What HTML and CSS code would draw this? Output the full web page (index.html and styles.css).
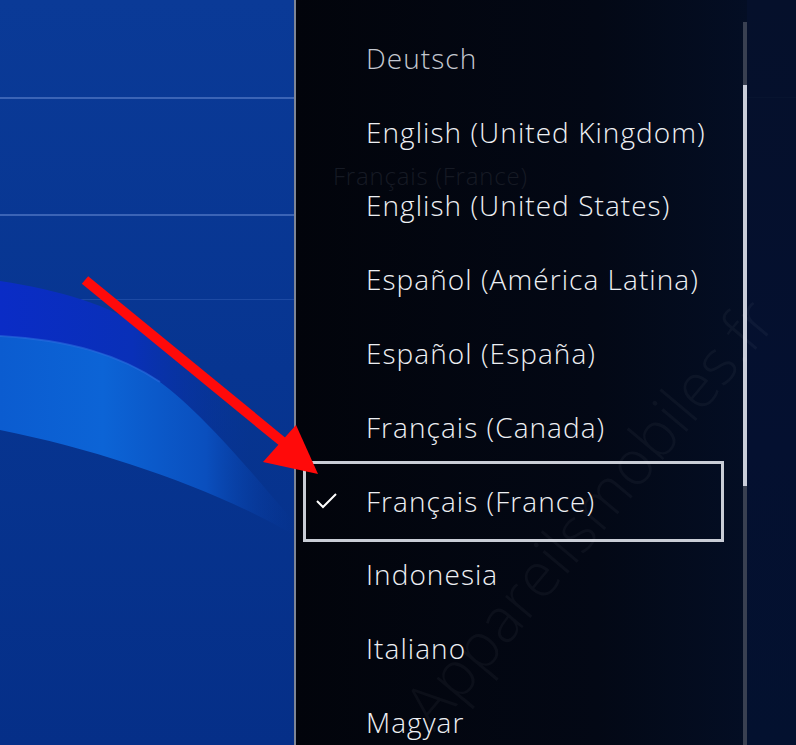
FILE: index.html
```html
<!DOCTYPE html>
<html lang="fr">
<head>
    <meta charset="UTF-8">
    <meta name="viewport" content="width=device-width, initial-scale=1.0">
    <title>Langue</title>
    <link rel="stylesheet" href="styles.css">
</head>
<body>
    <div class="screen">
        <div class="home">
            <div class="rule rule-1"></div>
            <div class="rule rule-2"></div>
            <div class="rule rule-3"></div>
            <svg class="waves" width="294" height="745" viewBox="0 0 294 745">
                <defs>
                    <linearGradient id="deep" x1="0" y1="0" x2="1" y2="0">
                        <stop offset="0" stop-color="#0a2cc6"/>
                        <stop offset="0.45" stop-color="#0930b8"/>
                        <stop offset="0.85" stop-color="#07349a" stop-opacity="0"/>
                    </linearGradient>
                    <linearGradient id="light" x1="0" y1="0" x2="1" y2="0">
                        <stop offset="0" stop-color="#0b5cd0"/>
                        <stop offset="0.35" stop-color="#0c64d6"/>
                        <stop offset="0.7" stop-color="#0a4fbe"/>
                        <stop offset="1" stop-color="#07389c" stop-opacity="0"/>
                    </linearGradient>
                </defs>
                <path d="M0,281 C60,290 110,305 150,332 C195,362 235,415 294,475 L294,525 C230,470 190,430 160,400 C120,362 70,342 0,336 Z" fill="url(#deep)"/>
                <path d="M0,336 C70,340 120,355 160,382 C200,412 240,458 294,522 L294,535 C220,492 110,452 0,430 Z" fill="url(#light)"/>
                <path d="M0,336 C70,340 120,355 160,382" fill="none" stroke="#2a6ee0" stroke-width="2" stroke-opacity="0.6"/>
            </svg>
        </div>
        <div class="divider"></div>
        <div class="panel">
            <div class="ghost">Français (France)</div>
            <ul class="lang-list">
                <li class="lang dim">Deutsch</li>
                <li class="lang">English (United Kingdom)</li>
                <li class="lang">English (United States)</li>
                <li class="lang">Español (América Latina)</li>
                <li class="lang">Español (España)</li>
                <li class="lang">Français (Canada)</li>
                <li class="lang selected">
                    <svg class="check" width="24" height="18" viewBox="0 0 24 18">
                        <polyline points="2,9 8,15 21,2" fill="none" stroke="#ffffff" stroke-width="2"/>
                    </svg>
                    Français (France)
                </li>
                <li class="lang">Indonesia</li>
                <li class="lang">Italiano</li>
                <li class="lang">Magyar</li>
            </ul>
            <div class="scroll">
                <div class="thumb"></div>
            </div>
            <div class="edge"></div>
        </div>
        <div class="watermark">Appareilsmobiles.fr</div>
        <svg class="arrow" width="796" height="745" viewBox="0 0 796 745">
            <line x1="85" y1="280" x2="284" y2="443" stroke="#ff0a0a" stroke-width="10"/>
            <polygon points="318,474 263,462 296,425" fill="#ff0a0a"/>
        </svg>
    </div>
</body>
</html>
```

FILE: styles.css
```css
* { margin: 0; padding: 0; box-sizing: border-box; }
body { width: 796px; height: 745px; overflow: hidden; background: #02050e;
       font-family: "Open Sans", "Noto Sans", sans-serif; }
.screen { position: relative; display: flex; width: 796px; height: 745px; }

.home { position: relative; width: 294px; height: 100%; overflow: hidden;
        background: linear-gradient(180deg, #0a3a97 0%, #073591 50%, #052f88 100%); }
.rule { position: absolute; left: 0; right: 0; height: 2px; background: #3b64b6; }
.rule-1 { top: 97px; }
.rule-2 { top: 214px; }
.rule-3 { top: 299px; height: 1px; background: #1d4aa4; }
.waves { position: absolute; left: 0; top: 0; }

.divider { width: 2px; height: 100%; background: #7e8594; }

.panel { position: relative; flex: 1; display: flex; height: 100%;
         background: linear-gradient(90deg, #02040b 0%, #030815 60%, #041029 100%); }
.ghost { position: absolute; left: 37px; top: 159px; font-size: 24px; font-weight: 300;
         letter-spacing: 0.8px; color: #161a24; white-space: nowrap; }

.lang-list { list-style: none; width: 445px; padding-top: 21px; }
.lang { position: relative; display: flex; align-items: center; height: 73.8px;
        padding-left: 70px; font-size: 28px; font-weight: 300; color: #eef0f4;
        white-space: nowrap; letter-spacing: 1.05px; }
.lang.dim { color: #c4c8d0; }
.lang.selected::before { content: ""; position: absolute; left: 7px; right: 17px; top: -3px; bottom: -4px;
                         border: 3px solid #c9cdd6; }
.check { position: absolute; left: 19px; top: 28px; }

.scroll { position: relative; width: 4px; margin-left: 2px; margin-top: 22px; height: 723px; background: #394051; }
.thumb { position: absolute; left: 0; top: 63px; width: 4px; height: 401px; background: #c9cdd9; }

.edge { flex: 1; height: 100%; position: relative;
        background: linear-gradient(180deg, #05102b 0%, #041030 60%, #03112f 100%); }
.edge::before { content: ""; position: absolute; left: 0; right: 0; top: 97px; height: 1px; background: #08142f; }

.watermark { position: absolute; left: 588px; top: 512px; transform: translate(-50%, -50%) rotate(-50deg);
             font-size: 62px; font-weight: 300; color: rgba(255, 255, 255, 0.04); white-space: nowrap;
             pointer-events: none; }
.arrow { position: absolute; left: 0; top: 0; pointer-events: none; }
```
